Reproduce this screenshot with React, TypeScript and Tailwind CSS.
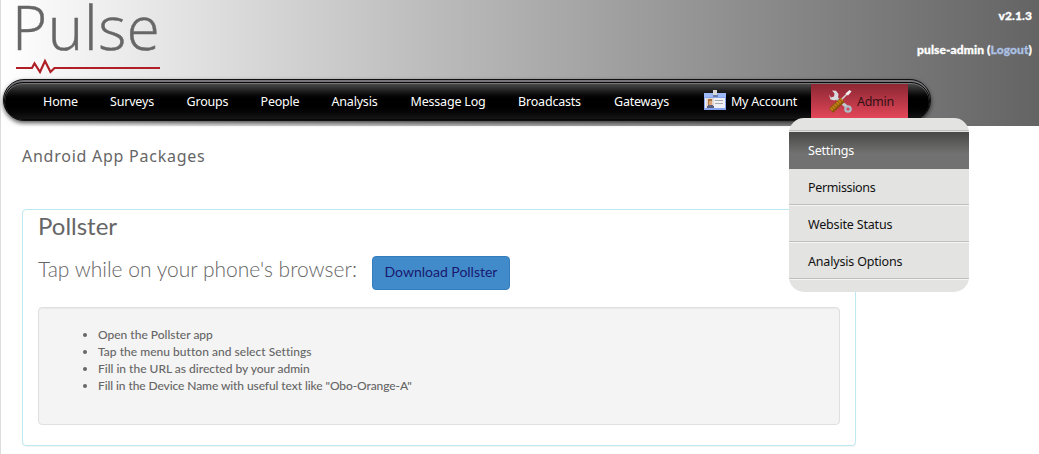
import React from "react";

type NavItem = { label: string; cls: string };

const navItems: NavItem[] = [
  { label: "Home", cls: "w-[67px]" },
  { label: "Surveys", cls: "w-[76px]" },
  { label: "Groups", cls: "w-[75px]" },
  { label: "People", cls: "w-[70px]" },
  { label: "Analysis", cls: "w-[79px]" },
  { label: "Message Log", cls: "w-[108px]" },
  { label: "Broadcasts", cls: "w-[95px]" },
  { label: "Gateways", cls: "w-[89px]" },
];

const steps = [
  { text: "Open the Pollster app", cls: "tracking-[0px]" },
  { text: "Tap the menu button and select Settings", cls: "tracking-[0.030px]" },
  { text: "Fill in the URL as directed by your admin", cls: "tracking-[0px]" },
  { text: 'Fill in the Device Name with useful text like "Obo-Orange-A"', cls: "tracking-[-0.090px]" },
];

function BadgeIcon() {
  return (
    <svg className="mr-[4px] h-6 w-6 shrink-0" viewBox="0 0 24 24" shapeRendering="crispEdges">
      <rect x="1" y="4" width="22" height="17" fill="#86a5ee" />
      <rect x="1" y="4" width="22" height="4" fill="#9db8f6" />
      <rect x="2" y="9" width="20" height="10" fill="#f0f1f5" />
      <rect x="10" y="1" width="4" height="5" fill="#d9d9d9" />
      <rect x="10" y="6" width="5" height="2" fill="#6d7ba8" />
      <rect x="3" y="9" width="8" height="10" fill="#e3d8cf" />
      <rect x="5" y="10" width="4" height="6" fill="#a9703f" />
      <rect x="6" y="12" width="3" height="4" fill="#d9a577" />
      <path d="M4 19v-2l2-1.500h3l2 1.500v2z" fill="#5a5f80" />
      <path d="M12 11.500h8M12 14.500h8" stroke="#a9a9ad" />
    </svg>
  );
}

function ToolsIcon() {
  return (
    <svg className="mr-[5px] h-6 w-6 shrink-0" viewBox="0 0 24 24">
      <path d="M7 8l12 10" stroke="#c4ccd0" strokeWidth="3" />
      <path d="M1 5.500L3 8.500L6 7.500L6.500 4.500L4 1.500L8 1.800L10.500 5L10 9L6.500 11.500L2.500 10.500z" fill="#d9dcdf" />
      <circle cx="20" cy="20" r="2.700" fill="#d9465a" stroke="#a9c0c8" strokeWidth="2.200" />
      <path d="M12.500 11.500l7-7" stroke="#d5d5d5" strokeWidth="1.600" />
      <path d="M17.500 4.500l4-3.500 2 1.500-3.500 4z" fill="#f1f1f1" />
      <path d="M3 21.500L14.500 11" stroke="#8a5208" strokeWidth="6" />
      <path d="M3 20.700L14 10.500" stroke="#bf8118" strokeWidth="3.500" strokeDasharray="2 0.700" />
    </svg>
  );
}

function MenuRow({ children, cls }: { children?: React.ReactNode; cls: string }) {
  return <div className={`flex h-[37px] items-center border-b pl-[19px] pt-[2px] ${cls}`}>{children}</div>;
}

const plainRow = "border-b-[#f5f5f4] shadow-[inset_0_-1px_0_#bebebc] tracking-[-0.180px]";

export default function App() {
  return (
    <div className="h-[454px] w-[1039px] overflow-hidden border-l border-[#dcdcdc] bg-white font-['Lato',sans-serif] text-[#666]">
      <header className="flex h-[126px] flex-col bg-linear-to-r from-white to-[#646464]">
        <div className="flex h-[79px] shrink-0 justify-between">
          <div className="relative w-[170px]">
            <div className="h-[56px] whitespace-nowrap pl-[11px] font-['Open_Sans',sans-serif] text-[60px] font-light leading-[54px] tracking-[0.700px] text-[#666] [-webkit-text-stroke:0.500px_#6b6b6b]">
              Pulse
            </div>
            <svg className="absolute left-[15px] top-[57px] h-[20px] w-[145px]" viewBox="0 0 145 20">
              <path d="M0 11H16L18.500 6.500L24 15L29 4L34.500 15L38.500 11H144" fill="none" stroke="#b01f26" strokeWidth="2.200" />
            </svg>
          </div>
          <div className="pr-[7px] text-right font-['Lato',sans-serif] text-[12px] font-black leading-[14px] tracking-[0.100px] text-white [-webkit-text-stroke:0.300px]">
            <div className="mt-[9px]">v2.1.3</div>
            <div className="mt-[20px]">
              pulse-admin (<a className="text-[#abc0e4]">Logout</a>)
            </div>
          </div>
        </div>
        <div className="ml-[2px] h-[42px] w-[928px] shrink-0 rounded-full border border-[#111] bg-[#77757a] pt-[2px] shadow-[0_2px_4px_rgba(0,0,0,0.65)]">
          <nav className="relative flex h-[38px] items-center rounded-full border border-[#080808] bg-linear-to-b from-[#505050] via-black via-50% to-[#161616] pl-[22px] font-['Noto_Sans',sans-serif] text-[12.500px] text-white shadow-[inset_0_1px_0_#777]">
            {navItems.map((item) => (
              <a key={item.label} className={`shrink-0 whitespace-nowrap pt-[2px] text-center tracking-[-0.2px] ${item.cls}`}>
                {item.label}
              </a>
            ))}
            <a className="ml-[17px] flex w-[108px] shrink-0 items-center whitespace-nowrap tracking-[-0.250px]">
              <BadgeIcon />
              <span className="pt-[2px]">My Account</span>
            </a>
            <a className="flex h-[34px] w-[97px] shrink-0 items-center bg-linear-to-b from-[#8d2733] to-[#e34759] pl-[17px] text-[#351016]">
              <ToolsIcon />
              <span className="pt-[2px] tracking-[-0.3px]">Admin</span>
            </a>
            <div className="absolute left-[784px] top-[35px] z-10 h-[174px] w-[180px] overflow-hidden rounded-[15px] bg-[#e3e3e1] text-[12.500px] text-[#111]">
              <div className="mb-px h-[13px] border-b border-[#bebebc]" />
              <MenuRow cls="border-b-[#717171] bg-linear-to-b from-[#484846] to-[#717171] to-60% text-white tracking-[-0.2px]">
                Settings
              </MenuRow>
              <MenuRow cls={`${plainRow} tracking-[-0.350px]`}>Permissions</MenuRow>
              <MenuRow cls={plainRow}>Website Status</MenuRow>
              <MenuRow cls={plainRow}>Analysis Options</MenuRow>
            </div>
          </nav>
        </div>
      </header>
      <main className="pl-[21px]">
        <h1 className="mt-[18px] h-[24px] font-['Noto_Sans',sans-serif] text-[16px] font-normal leading-[24px] tracking-[0.750px]">
          Android App Packages
        </h1>
        <section className="mt-[41px] h-[237px] w-[834px] rounded-[4px] border border-[#bce8f1] px-[15px] shadow-[0_1px_1px_rgba(0,0,0,0.05)]">
          <h2 className="mt-[3px] h-[26px] text-[24px] leading-[26px]">Pollster</h2>
          <div className="mt-[17px] flex h-[34px] items-center">
            <div className="w-[334px] whitespace-nowrap pb-[8px] text-[21px] font-light">Tap while on your phone's browser:</div>
            <button className="h-[34px] w-[138px] whitespace-nowrap rounded-[4px] border border-[#357ebd] bg-[#428bca] pb-[3px] text-[14px] text-[#191970]">
              Download Pollster
            </button>
          </div>
          <div className="mt-[17px] h-[118px] rounded-[4px] border border-[#e0e0e0] bg-[#f4f4f4] pl-[59px] pt-[18px] shadow-[inset_0_1px_1px_rgba(0,0,0,0.05)]">
            <ul className="list-disc text-[12px] font-medium leading-[17px]">
              {steps.map((s) => (
                <li key={s.text}>
                  <span className={s.cls}>{s.text}</span>
                </li>
              ))}
            </ul>
          </div>
        </section>
      </main>
    </div>
  );
}
